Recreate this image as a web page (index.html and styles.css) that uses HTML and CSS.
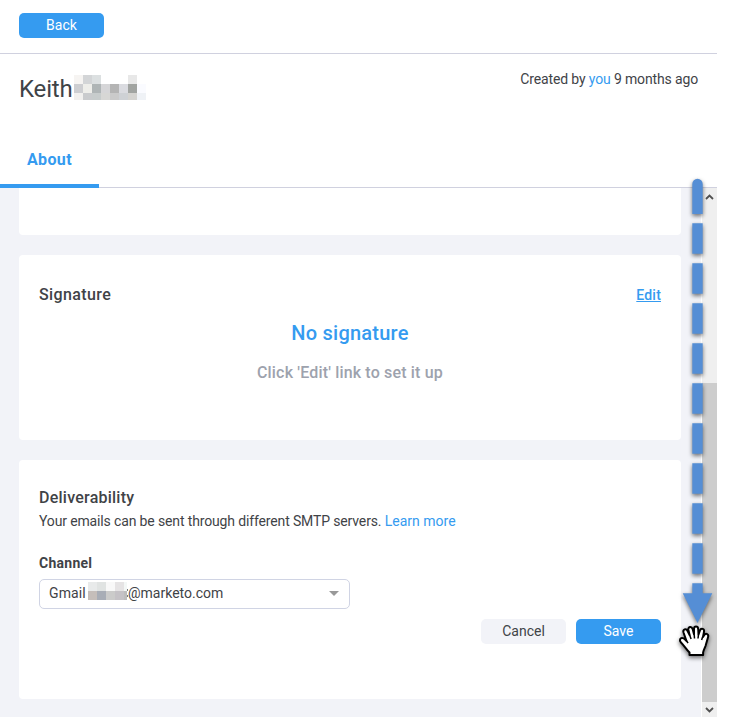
FILE: index.html
```html
<!DOCTYPE html>
<html lang="en">
<head>
<meta charset="utf-8">
<title>Keith</title>
<link rel="stylesheet" href="styles.css">
</head>
<body>
<div class="app">
  <header class="topbar"><button class="btn primary back">Back</button></header>
  <section class="profile">
    <h1><span class="name">Keith</span><svg class="redacted" width="72" height="25" viewBox="0 0 72 25" shape-rendering="crispEdges"><path fill="#f6f4f2" d="M0 0h9v9H0z"/><path fill="#d3d5d7" d="M9 0h9v9H9z"/><path fill="#dce0e1" d="M18 0h9v9h-9z"/><path fill="#e8e8e8" d="M54 0h9v9h-9z"/><path fill="#cdced1" d="M0 9h9v9H0z"/><path fill="#eeeeea" d="M9 9h9v9H9z"/><path fill="#afb5b6" d="M18 9h9v9h-9z"/><path fill="#d6d6d8" d="M27 9h9v9h-9z"/><path fill="#b4b4b4" d="M36 9h9v9h-9z"/><path fill="#dadbe0" d="M45 9h9v9h-9z"/><path fill="#a1a4a1" d="M54 9h9v9h-9z"/><path fill="#fafbff" d="M63 9h9v9h-9z"/><path fill="#f1f0ee" d="M0 18h9v7H0z"/><path fill="#c9cbcd" d="M9 18h9v7H9z"/><path fill="#c7cccc" d="M18 18h9v7h-9z"/><path fill="#d7d7d5" d="M27 18h9v7h-9z"/><path fill="#cacaca" d="M36 18h9v7h-9z"/><path fill="#ced1d5" d="M45 18h9v7h-9z"/><path fill="#d4d3d0" d="M54 18h9v7h-9z"/><path fill="#eff2f6" d="M63 18h9v7h-9z"/></svg></h1>
    <p class="created">Created by <a>you</a> 9 months ago</p>
  </section>
  <nav class="tabs"><a class="tab">About</a></nav>
  <div class="body">
    <main class="content">
      <section class="card previous"></section>
      <section class="card signature">
        <div class="card-head"><h2>Signature</h2><a class="edit">Edit</a></div>
        <p class="empty-title">No signature</p>
        <p class="empty-hint">Click 'Edit' link to set it up</p>
      </section>
      <section class="card delivery">
        <h2 class="delivery-title">Deliverability</h2>
        <p class="description">Your emails can be sent through different SMTP servers. <a>Learn more</a></p>
        <h3>Channel</h3>
        <div class="select"><span class="gmail">Gmail</span><svg class="mask" width="40" height="18" viewBox="0 0 40 18" shape-rendering="crispEdges"><path fill="#e8eaea" d="M0 0h9v9H0z"/><path fill="#e0e3e2" d="M9 0h9v9H9z"/><path fill="#f8f8f8" d="M18 0h9v9h-9z"/><path fill="#e5e3e4" d="M27 0h9v9h-9z"/><path fill="#f3f7f6" d="M36 0h3v9h-3z"/><path fill="#c5beba" d="M0 9h9v9H0z"/><path fill="#a8adb6" d="M9 9h9v9H9z"/><path fill="#cbcbca" d="M18 9h9v9h-9z"/><path fill="#c5c2c6" d="M27 9h9v9h-9z"/><path fill="#bdbdbd" d="M36 9h3v9h-3z"/><path fill="#77797c" d="M39 7h1v2h-1zM39 13h1v2h-1z"/></svg><span class="domain">@marketo.com</span><svg class="caret" width="10" height="5"><path d="M0 0h10L5 5z" fill="#999"/></svg></div>
        <div class="actions"><button class="btn">Cancel</button><button class="btn primary">Save</button></div>
      </section>
    </main>
    <aside class="scrollbar">
      <svg class="up" width="15" height="17"><path d="M4 11l3.500-3.500L11 11" fill="none" stroke="#505050" stroke-width="1.800"/></svg>
      <div class="thumb"></div>
      <svg class="down" width="15" height="15"><path d="M4 6l3.500 3.500L11 6" fill="none" stroke="#505050" stroke-width="1.800"/></svg>
    </aside>
  </div>
  <svg class="pointer" width="48" height="492" viewBox="672 172 48 492">
    <g class="shadow" fill="#558ed5">
      <path d="M692.300 214V184a5.200 5.200 0 0 1 10.400 0v30z"/>
      <path d="M692.300 223.300h10.400v30.500h-10.400zM692.300 263.300h10.400v30.500h-10.400zM692.300 303.300h10.400v30.500h-10.400zM692.300 343.300h10.400v30.500h-10.400zM692.300 383.300h10.400v30.500h-10.400zM692.300 423.300h10.400v30.500h-10.400zM692.300 463.300h10.400v30.500h-10.400zM692.300 503.300h10.400v30.500h-10.400zM692.300 543.300h10.400v30.500h-10.400zM692.300 583.300h10.400v10H712.300L697.500 623 682.700 593.300h9.600z"/>
    </g>
    <path class="hand" d="M689.500 655v-2.500C686 649 684 645.500 681 642.500c-2.200-2.500-.8-5.200 2-4.400 1.500.5 2.500 2 3.500 2.900l-3-8.500c-1-3.200 2.600-4.700 4.100-1.500l2 4-1.200-5c-.7-3.500 3.300-4.200 4.300-.8l1.300 5V629c0-3.200 4-3.200 4.200 0l.3 5.500 1.500-4c1-3 4.700-1.800 4 1.300l-1 5.200 1.300-2c1.600-2.500 4.700-.8 3.800 2l-2.600 9c-.8 2.500-2 4-2.400 6.500v2.500z" fill="#fff" stroke="#000" stroke-width="2" stroke-linejoin="round"/>
    <path d="M689.600 635l1.500 4M694.200 634.500l.3 4M698.500 634.500l-.5 4M702.600 637l-1 3M686.500 641l1.600 2" fill="none" stroke="#000" stroke-width="1.500"/>
  </svg>
</div>
</body>
</html>
```
FILE: styles.css
```css
* { box-sizing: border-box; }
body { margin: 0; background: #fff; color: #3f4347; font: 14px/20px Roboto, sans-serif; overflow: hidden; }
h1, h2, h3, p { margin: 0; }
a { color: #359bf0; }
.app { position: relative; width: 717px; height: 717px; display: flex; flex-direction: column; }
.topbar { height: 54px; padding: 13px 19px; border-bottom: 1px solid #d0d1df; }
.btn { display: block; width: 85px; height: 25px; padding: 0; border: 0; border-radius: 5px; background: #f2f3f8; color: #3f4347; font: 14px/25px Roboto, sans-serif; }
.primary { background: #359bf0; color: #fff; }
.profile { height: 78px; padding: 15px 19px 0 19px; display: flex; justify-content: space-between; }
h1 { height: 40px; display: flex; font-size: 24px; line-height: 40px; font-weight: 400; letter-spacing: -.15px; }
.name { width: 55px; }
.redacted { margin-top: 6px; }
.created { line-height: 21px; letter-spacing: -.14px; }
.tabs { height: 56px; border-bottom: 1px solid #d0d1df; }
.tab { display: block; width: 99px; height: 56px; padding-left: 27px; line-height: 56px; font-size: 16px; font-weight: 700; letter-spacing: .35px; border-bottom: 4px solid #359bf0; }
.body { height: 529px; display: flex; background: #f2f3f8; }
.content { width: 702px; padding: 0 20px 0 19px; border-right: 1px solid #fff; }
.card { background: #fff; border-radius: 4px; padding: 0 20px; }
.previous { height: 47px; border-radius: 0 0 4px 4px; }
.signature { height: 185px; margin-top: 20px; padding-top: 30px; text-align: center; }
.card-head { display: flex; justify-content: space-between; }
h2 { font-size: 16px; line-height: 20px; font-weight: 500; letter-spacing: .38px; }
.delivery-title { letter-spacing: .24px; }
.edit { text-decoration: underline; font-weight: 500; letter-spacing: .2px; }
.empty-title { margin-top: 14px; color: #359bf0; font-size: 20px; line-height: 28px; font-weight: 500; letter-spacing: .24px; }
.empty-hint { margin-top: 16px; color: #9da2ad; font-size: 16px; line-height: 20px; font-weight: 500; letter-spacing: .17px; }
.delivery { height: 239px; margin-top: 20px; padding-top: 28px; }
.description { margin-top: 3px; white-space: nowrap; letter-spacing: -.14px; }
.description a { letter-spacing: 0; }
h3 { margin-top: 22px; font-size: 14px; line-height: 20px; font-weight: 700; letter-spacing: .26px; }
.select { width: 311px; height: 30px; margin-top: 6px; padding: 0 10px 0 9px; display: flex; border: 1px solid #d0d4e4; border-radius: 5px; line-height: 26px; }
.gmail { width: 39px; letter-spacing: .1px; }
.mask { margin-top: 2px; }
.caret { margin: 11px 0 0 auto; }
.actions { margin-top: 10px; display: flex; justify-content: flex-end; gap: 10px; }
.scrollbar { width: 15px; display: flex; flex-direction: column; background: #efefef; }
.thumb { height: 319px; margin-top: 178px; background: #cdcdcd; }
.pointer { position: absolute; left: 672px; top: 172px; }
.shadow, .hand { filter: drop-shadow(0 2px 2px rgba(0, 0, 0, .55)); }
```
